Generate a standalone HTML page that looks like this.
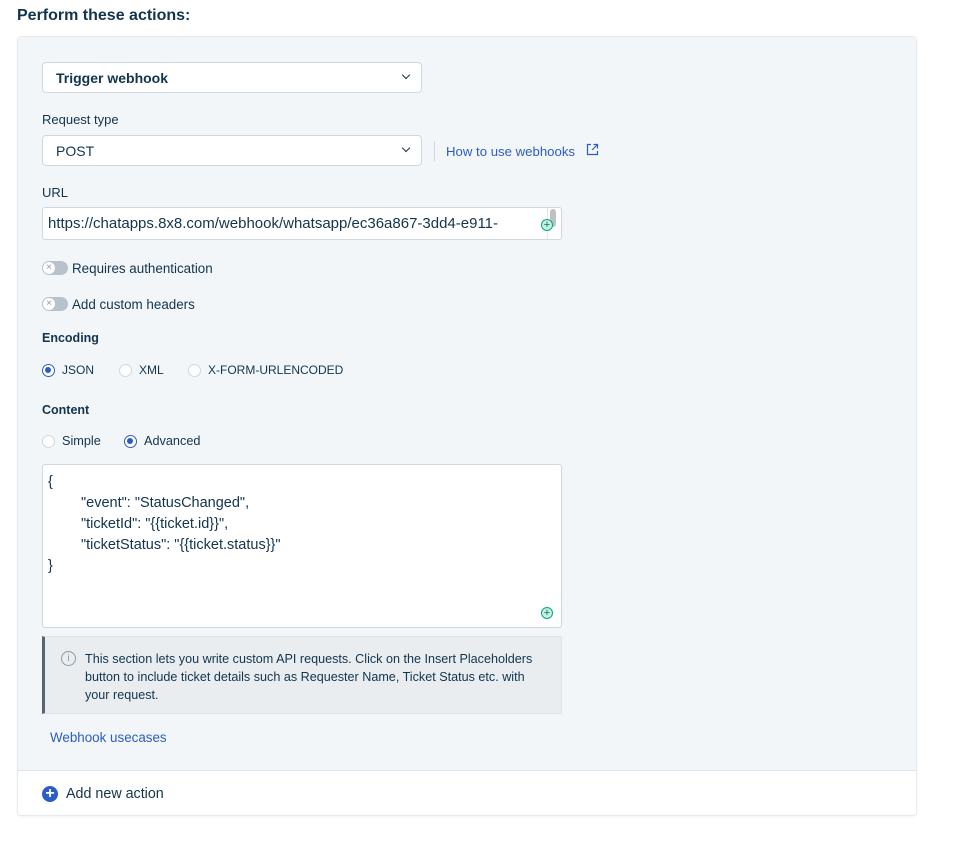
<!DOCTYPE html>
<html><head><meta charset="utf-8"><style>
*{box-sizing:border-box;margin:0;padding:0}
body{width:953px;height:847px;background:#fff;font-family:"Liberation Sans",sans-serif;color:#12344d;position:relative;overflow:hidden}
.a{position:absolute;white-space:nowrap}
.t{font-size:13px;color:#12344d}
.sel{position:absolute;left:42px;width:380px;height:31px;background:#fff;border:1px solid #cfd7df;border-radius:4px;font-size:14px;padding:7px 0 0 13px}
.chev{position:absolute;right:12px;top:9px;width:6px;height:6px;border-right:1.5px solid #12344d;border-bottom:1.5px solid #12344d;transform:rotate(45deg)}
.tog{position:absolute;left:42px;width:26px;height:14px;border-radius:7px;background:#b8c2cc}
.tog::after{content:"×";position:absolute;left:1px;top:1px;width:12px;height:12px;border-radius:50%;background:#fff;font-size:10px;line-height:11px;text-align:center;color:#8a99a8}
.rad{position:absolute;width:13px;height:13px;border-radius:50%;border:1px solid #cfd7df;background:#fff}
.rad.on{border:1.5px solid #2c5cc5}
.rad.on::after{content:"";position:absolute;left:2px;top:2px;width:6px;height:6px;border-radius:50%;background:#2c5cc5}
.plus{position:absolute;width:12px;height:12px;border-radius:50%;border:1px solid #00a886;background:#c8efe2;color:#00795e;font-size:11px;line-height:10px;text-align:center}
</style></head><body>
<div class="a" style="left:17px;top:7px;font-size:16px;font-weight:bold;color:#12344d">Perform these actions:</div>
<div class="a" style="left:17px;top:36px;width:900px;height:780px;border:1px solid #e6eaee;border-radius:4px;background:#fff;box-shadow:0 1px 2px rgba(0,0,0,.05)"></div>
<div class="a" style="left:18px;top:37px;width:898px;height:734px;background:#f3f6f9;border-bottom:1px solid #dfe4e8"></div>

<div class="sel" style="top:62px;font-weight:bold">Trigger webhook<span class="chev"></span></div>
<div class="a t" style="left:42px;top:112px">Request type</div>
<div class="sel" style="top:135px">POST<span class="chev"></span></div>
<div class="a" style="left:434px;top:141px;width:1px;height:20px;background:#cfd7df"></div>
<div class="a" style="left:446px;top:144px;font-size:13.2px;color:#2c5cc5">How to use webhooks</div>
<svg class="a" style="left:586px;top:143px" width="13" height="13" viewBox="0 0 13 13" fill="none" stroke="#2c5cc5" stroke-width="1.2"><path d="M5 1.5H1.5v10h10V8M7.5 1.5h4v4M11.5 1.5L6 7"/></svg>

<div class="a t" style="left:42px;top:185px">URL</div>
<div class="a" style="left:42px;top:207px;width:520px;height:33px;background:#fff;border:1px solid #cfd7df;border-radius:3px"></div>
<div class="a" style="left:48px;top:215px;font-size:15px;color:#12344d">https://chatapps.8x8.com/webhook/whatsapp/ec36a867-3dd4-e911-</div>
<div class="a" style="left:550px;top:209px;width:6px;height:18px;border-radius:3px;background:#c1c1c1"></div>
<div class="a" style="left:547px;top:208px;width:1px;height:31px;background:#e6e6e6"></div>
<div class="plus" style="left:541px;top:219px">+</div>

<div class="tog" style="top:261px"></div>
<div class="a t" style="left:72px;top:261px;font-size:13.4px">Requires authentication</div>
<div class="tog" style="top:297px"></div>
<div class="a t" style="left:72px;top:297px;font-size:13.4px">Add custom headers</div>

<div class="a t" style="left:42px;top:331px;font-weight:bold;font-size:12.5px">Encoding</div>
<div class="rad on" style="left:42px;top:364px"></div><div class="a t" style="left:62px;top:363px;font-size:12px">JSON</div>
<div class="rad" style="left:119px;top:364px"></div><div class="a t" style="left:139px;top:363px;font-size:12px">XML</div>
<div class="rad" style="left:188px;top:364px"></div><div class="a t" style="left:208px;top:363px;font-size:12px">X-FORM-URLENCODED</div>

<div class="a t" style="left:42px;top:403px;font-weight:bold;font-size:12.5px">Content</div>
<div class="rad" style="left:42px;top:435px"></div><div class="a t" style="left:62px;top:434px;font-size:12.7px">Simple</div>
<div class="rad on" style="left:124px;top:435px"></div><div class="a t" style="left:144px;top:434px;font-size:12.7px">Advanced</div>

<div class="a" style="left:42px;top:464px;width:520px;height:164px;background:#fff;border:1px solid #cfd7df;border-radius:3px"></div>
<div class="a" style="left:48px;top:472px;font-size:14.5px;line-height:21px;color:#12344d">{<br><span style="padding-left:33px">"event": "StatusChanged",</span><br><span style="padding-left:33px">"ticketId": "{{ticket.id}}",</span><br><span style="padding-left:33px">"ticketStatus": "{{ticket.status}}"</span><br>}</div>
<div class="plus" style="left:541px;top:607px">+</div>

<div class="a" style="left:42px;top:636px;width:520px;height:78px;background:#e9edf0;border:1px solid #dfe4e8;border-left:3px solid #5b6470"></div>
<div class="a" style="left:61px;top:651px;width:15px;height:15px;border-radius:50%;border:1px solid #8a99a8;font-size:10px;line-height:13px;text-align:center;color:#8a99a8">i</div>
<div class="a" style="left:85px;top:650px;font-size:12.6px;line-height:18px;color:#12344d">This section lets you write custom API requests. Click on the Insert Placeholders<br>button to include ticket details such as Requester Name, Ticket Status etc. with<br>your request.</div>

<div class="a" style="left:50px;top:730px;font-size:13.4px;color:#2c5cc5">Webhook usecases</div>

<div class="a" style="left:42px;top:786px;width:16px;height:16px;border-radius:50%;background:#2c5cc5;color:#fff;font-size:16px;line-height:16px;text-align:center;font-weight:bold">+</div>
<div class="a" style="left:66px;top:786px;font-size:14.3px;color:#12344d">Add new action</div>
</body></html>
